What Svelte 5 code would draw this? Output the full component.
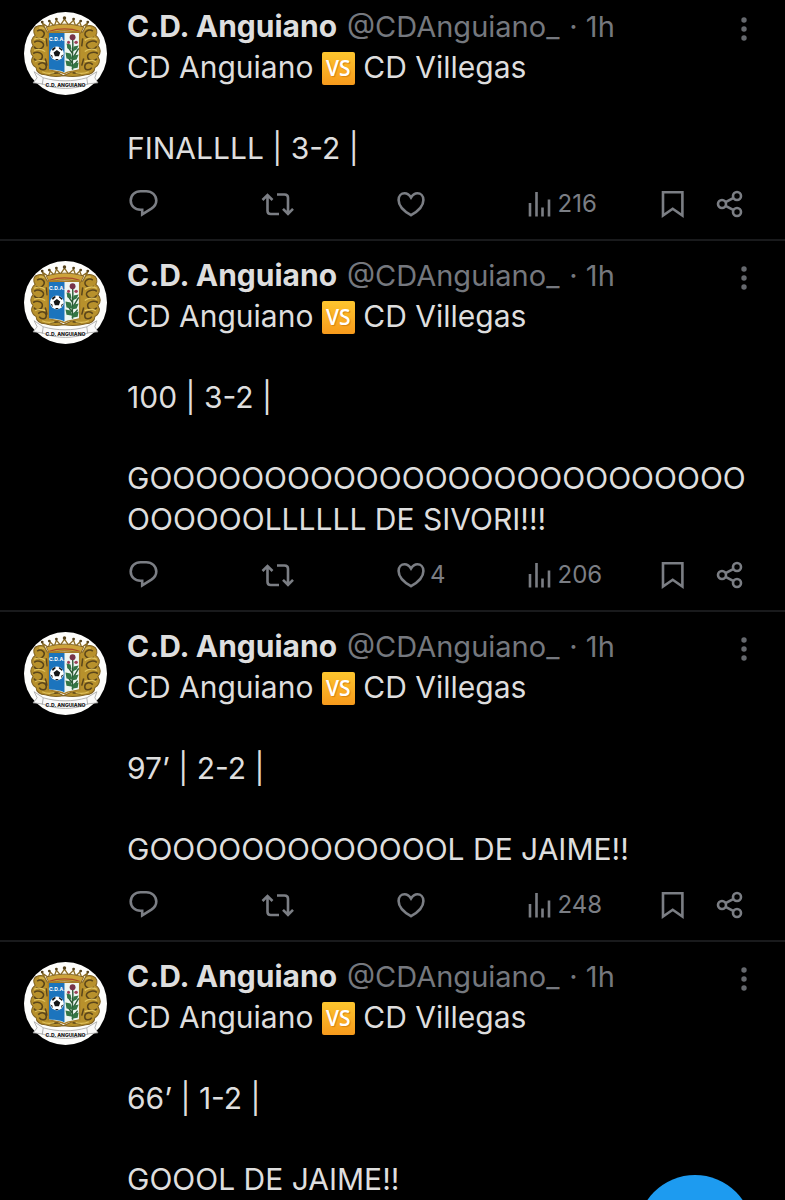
<script lang="ts">
	const posts = [
		{ id: 1, lines: ['FINALLLL | 3-2 |'], likes: '', views: '216' },
		{
			id: 2,
			lines: ['100 | 3-2 |', 'G' + 'O'.repeat(32) + 'LLLLLL DE SIVORI!!!'],
			likes: '4',
			views: '206'
		},
		{ id: 3, lines: ['97’ | 2-2 |', 'G' + 'O'.repeat(13) + 'L DE JAIME!!'], likes: '', views: '248' },
		{ id: 4, lines: ['66’ | 1-2 |', 'GOOOL DE JAIME!!'], likes: '', views: '' }
	];
</script>

{#snippet crest()}
	<svg class="avatar" viewBox="0 0 82 82" role="img" aria-label="C.D. Anguiano">
		<circle cx="41" cy="41" r="41" fill="#fdfdfb" />
		<!-- mantling -->
		<g fill="#b8912c" stroke="#806223" stroke-width="1">
			<path d="M26 20c-2-5-8-8-13-6 -4 1-4 6-2 9 -4 3-4 7-2 10 -3 4-3 8 0 11 -3 4-1 9 3 11 0 4 4 7 9 7 6 2 12 2 18 1L26 56z" />
			<path d="M54 20c2-5 9-8 14-6 4 1 5 6 3 9 4 3 4 7 2 10 3 4 3 8 0 11 3 4 1 9-3 11 0 4-4 7-9 7 -7 2-14 2-22 1L54 56z" />
		</g>
		<g fill="none" stroke="#5a451a" stroke-width="1.5">
			<path d="M13 19c4-3 9 1 6 5s-7 1-7 1M10 30c4-3 11 0 9 4s-8 3-9 0M9 41c5-3 10 0 9 4s-7 4-8 1M14 52c3-3 8-2 8 2s-5 4-7 1M22 26l1 8M21 46l2 7M26 61l8-1" />
			<path d="M68 19c-4-3-10 1-7 5s7 1 8 1M72 30c-4-3-12 0-10 4s8 3 10 0M73 41c-5-3-11 0-10 4s7 4 9 1M68 52c-3-3-8-2-8 2s5 4 7 1M58 26l-1 8M59 46l-2 7M56 61l-8-1" />
		</g>
		<g fill="none" stroke="#dfc15c" stroke-width="1.300">
			<path d="M15 16c4-1 7 1 8 4M10 27c4-2 8-1 11 1M10 38c4-2 8-1 11 1M11 49c4-2 7-1 10 0M18 59c4 2 8 2 12 1" />
			<path d="M66 16c-4-1-7 1-8 4M72 27c-4-2-9-1-12 1M72 38c-4-2-9-1-12 1M71 49c-4-2-8-1-11 0M64 59c-4 2-9 2-13 1" />
		</g>
		<!-- crown -->
		<path d="M23 20l-5-9 6 4 2-5 4 4 2-6 4 5 4-6 4 6 5-5 2 6 4-4 2 5 6-4-5 9c-11-4-24-4-35 0z" fill="#fdf8e6" stroke="#8b6c26" stroke-width="1.300" />
		<path d="M22 15c11-4 26-4 37 0l-3 6c-9-3-23-3-31 0z" fill="#cda33a" stroke="#7b5c20" stroke-width=".8" />
		<path d="M25 19c9-3 21-3 30 0" fill="none" stroke="#a84a2d" stroke-width="1.2" />
		<g fill="#57431b">
			<circle cx="18" cy="10" r="1.400" />
			<circle cx="25" cy="9" r="1.400" />
			<circle cx="32" cy="7" r="1.400" />
			<circle cx="40" cy="6" r="1.700" />
			<circle cx="49" cy="7" r="1.400" />
			<circle cx="56" cy="9" r="1.400" />
			<circle cx="63" cy="10" r="1.400" />
		</g>
		<!-- shield -->
		<path d="M24 20h31v37c-5 2-11 1-15 4 -5-3-11-2-16-4z" fill="#eef6f1" stroke="#a77d28" stroke-width="1.4" />
		<path d="M24.700 20.700H40v39c-5-3-11-2-15.300-3.400z" fill="#1c74bd" />
		<text x="32.500" y="29" text-anchor="middle" class="shield-text">C.D.A.</text>
		<circle cx="32.500" cy="41" r="6.800" fill="#fff" />
		<path d="M32.500 37.500l3.300 2.400-1.300 3.800h-4l-1.300-3.800zM27.500 36.500l3-2 1 1-3 3zM34.500 34.500l3.500 2.500-.5 1.500-3-2.500zM26 42l2 1 .5 3zM39 42l-2 1-.5 3zM30.500 46.500h4l-2 1.300z" fill="#151515" />
		<path d="M48 27c1 8-1 14 0 30M48 41l-5-7M48 46l6-10M48 51l-5-7M48 54l5-6" fill="none" stroke="#2c5a36" stroke-width="1.400" />
		<g fill="#347544">
			<path d="M42 31l4 1 1 5-4-1zM54 33l-5 1-1 5 4-2zM41 40l5 1 2 6-6-1zM54 42l-5 1-2 5 5-1zM41 48l5 1 2 5-6-1zM54 50l-5 1-2 5 6-1z" />
		</g>
		<circle cx="48" cy="25" r="2.900" fill="#77344b" />
		<circle cx="51.500" cy="30" r="1.700" fill="#9e4058" />
		<circle cx="44" cy="30" r="1.500" fill="#9e4058" />
		<!-- ribbon -->
		<path d="M10 59l9 6c14 4 29 4 43 0l10-6-2 6 3 5-10 1c-13 6-31 6-45 0l-9-1 4-5z" fill="#fafafa" stroke="#a5a5a5" stroke-width=".8" />
		<path d="M19 65l-1 7M62 65l1 7" stroke="#999" stroke-width=".7" />
		<text x="41" y="74" text-anchor="middle" class="ribbon-text">C.D. ANGUIANO</text>
	</svg>
{/snippet}

<main class="feed">
	{#each posts as post (post.id)}
		<article class="post">
			{@render crest()}
			<div class="content">
				<header class="head">
					<span class="name">C.D. Anguiano</span>
					<span class="meta">@CDAnguiano_</span>
					<span class="meta time">· 1h</span>
					<button class="more" aria-label="More">
						<svg width="18" height="24" viewBox="0 0 18 24" fill="currentColor">
							<circle cx="9" cy="3" r="2.700" />
							<circle cx="9" cy="12" r="2.700" />
							<circle cx="9" cy="21" r="2.700" />
						</svg>
					</button>
				</header>
				<div class="body">
					<p>CD Anguiano <span class="versus">VS</span> CD Villegas</p>
					{#each post.lines as line}
						<p>{line}</p>
					{/each}
				</div>
				<div class="actions">
					<button class="action" aria-label="Reply">
						<svg width="34" height="32" viewBox="0 0 34 32">
							<path d="M13.500 3.200h5.800c5.600 0 10 4.100 10 9.300 0 3.400-1.700 6-4.900 8.100L15.200 26.300v-4.500h-1.700c-5.600 0-9.800-4.100-9.800-9.300s4.200-9.300 9.800-9.300z" />
						</svg>
					</button>
					<button class="action" aria-label="Repost">
						<svg width="34" height="32" viewBox="0 0 34 32">
							<path d="M1.500 12l5-5 5 5M6.500 7.500v15.300c0 2 1.300 3.200 3.200 3.200H18M16 6.500h7.500c2 0 3.500 1.200 3.500 3.200V25.500M22 20.800l5 5 5-5" />
						</svg>
					</button>
					<button class="action" aria-label="Like">
						<svg width="34" height="32" viewBox="0 0 34 32">
							<path d="M17 27.200C9.500 23 4.600 17.600 4.600 12c0-4 2.700-6.700 6-6.700 2.600 0 4.600 1.300 6.400 4.200 1.800-2.900 3.800-4.200 6.400-4.200 3.300 0 6 2.700 6 6.700 0 5.600-4.900 11-12.400 15.200z" />
						</svg>
						<span>{post.likes}</span>
					</button>
					<button class="action" aria-label="Views">
						<svg width="28" height="32" viewBox="0 0 28 32">
							<path d="M2 15v13.500M8.500 4v24.500M14.500 19.500v9M21 11.500v17" />
						</svg>
						<span>{post.views}</span>
					</button>
					<button class="action bookmark" aria-label="Bookmark">
						<svg width="24" height="32" viewBox="0 0 24 32">
							<path d="M2 4.200h19.400v23.400L11.700 20.800l-9.700 6.800z" />
						</svg>
					</button>
					<button class="action share" aria-label="Share">
						<svg width="28" height="32" viewBox="0 0 28 32">
							<circle cx="6" cy="16" r="4" />
							<circle cx="21" cy="8" r="4" />
							<circle cx="21" cy="24" r="4" />
							<path d="M9.600 14.200l8-4.400M9.600 17.800l8 4.400" />
						</svg>
					</button>
				</div>
			</div>
		</article>
	{/each}
</main>

<button class="compose" aria-label="New post">
	<svg width="48" height="48" viewBox="0 0 48 48" fill="none" stroke="#fff" stroke-width="4">
		<path d="M24 8v32M8 24h32" />
	</svg>
</button>

<style>
	:global(body) {
		margin: 0;
		background: #000;
		font-family: Inter, 'Liberation Sans', sans-serif;
	}

	:global(#app) {
		height: 100vh;
		overflow: hidden;
	}

	.feed {
		margin-top: -8px;
		color: #dedede;
		font-size: 30px;
		line-height: 41px;
	}

	.post {
		display: flex;
		align-items: flex-start;
		gap: 20px;
		padding: 14px 24px 19px;
		border-bottom: 2px solid #191a1c;
	}

	.avatar {
		flex: none;
		width: 83px;
		height: 83px;
		margin-top: 6px;
	}

	.shield-text {
		fill: #fff;
		font: 700 5px Inter, sans-serif;
	}

	.ribbon-text {
		fill: #161616;
		font: 800 5px Inter, sans-serif;
	}

	.content {
		flex: 1;
		min-width: 0;
	}

	.head {
		display: flex;
		align-items: center;
		white-space: nowrap;
		padding-right: 8px;
	}

	.name {
		font-weight: 700;
		margin-right: 10px;
	}

	.meta {
		color: #75787e;
		font-size: 29px;
	}

	.time {
		margin-left: 10px;
	}

	button {
		border: 0;
		padding: 0;
		background: none;
		color: inherit;
		font: inherit;
		cursor: pointer;
	}

	.more {
		display: flex;
		margin-left: auto;
		padding-top: 4px;
		color: #66696e;
	}

	.body {
		display: flex;
		flex-direction: column;
		gap: 40px;
	}

	p {
		margin: 0;
		overflow-wrap: anywhere;
	}

	.versus {
		display: inline-block;
		width: 33px;
		height: 33px;
		border-radius: 2px;
		background: linear-gradient(#fdc62e, #f79a1c);
		color: #fff;
		font: 600 21px/33px 'Open Sans', sans-serif;
		text-align: center;
		text-shadow: 1px 1px 1px #d98312;
		vertical-align: 2px;
		overflow-wrap: normal;
	}

	.actions {
		display: flex;
		margin-top: 19px;
		padding-right: 17px;
		color: #7b7e84;
		font-size: 24px;
		line-height: 32px;
	}

	.action {
		display: flex;
		flex: 1;
		align-items: center;
		gap: 2px;
	}

	.action svg {
		flex: none;
		fill: none;
		stroke: currentColor;
		stroke-width: 2.6;
	}

	.bookmark {
		flex: 0 0 55px;
	}

	.share {
		flex: 0 0 28px;
	}

	.compose {
		position: fixed;
		right: 32px;
		bottom: -91px;
		display: grid;
		place-items: center;
		width: 116px;
		height: 116px;
		border-radius: 50%;
		background: #1d9bf0;
	}
</style>
